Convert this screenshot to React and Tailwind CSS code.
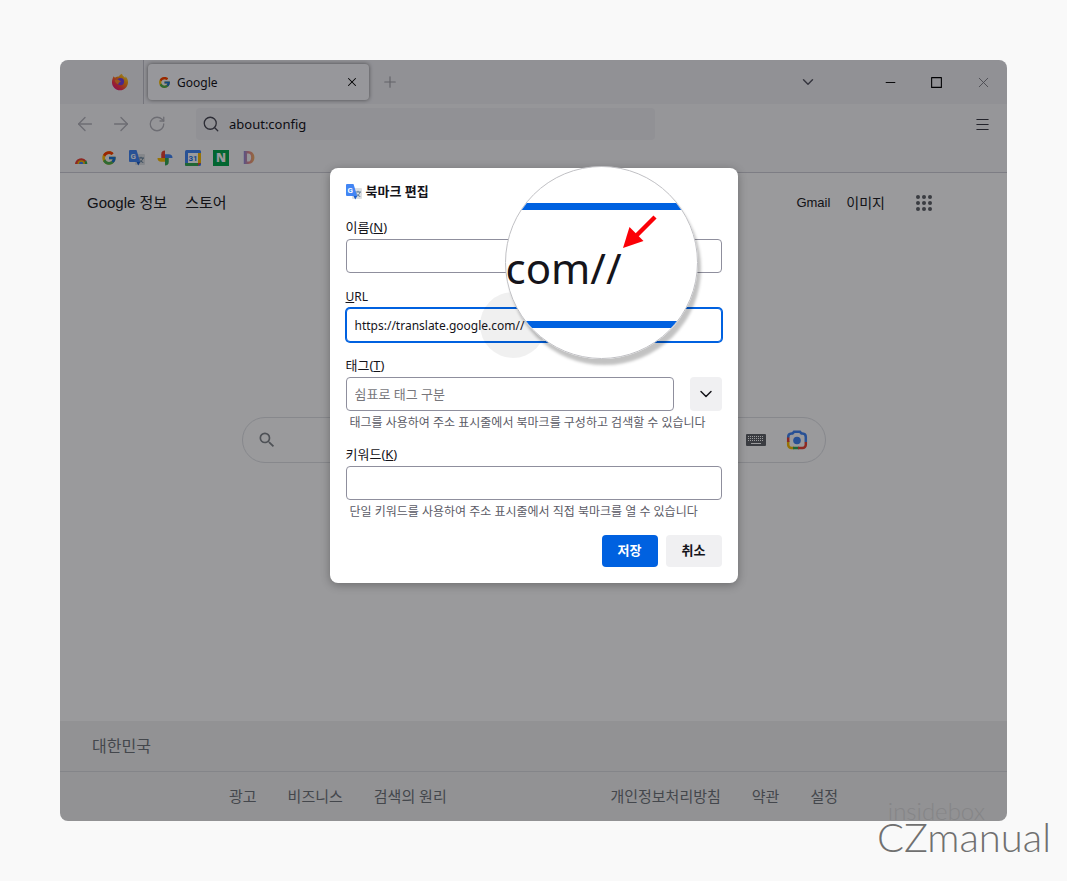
import { useState } from 'react';
import { ArrowLeft, ArrowRight, ChevronDown, Menu, Minus, Plus, RotateCw, Search, Square, X } from 'lucide-react';
import { FcGoogle } from 'react-icons/fc';
import { MdSearch } from 'react-icons/md';

function FirefoxIcon() {
  return (
    <svg width="18" height="18" viewBox="0 0 18 18" aria-hidden="true">
      <defs>
        <linearGradient id="fx" x1="1" y1="0" x2="0.2" y2="1">
          <stop offset="0" stopColor="#fff44f" />
          <stop offset="0.4" stopColor="#ff980e" />
          <stop offset="0.75" stopColor="#ff3647" />
          <stop offset="1" stopColor="#e31587" />
        </linearGradient>
      </defs>
      <path d="M2.600 3.200c.5.9 1 1.300 1.700 1.400C5.600 3.600 7 3.400 8 3.600 8.600 2.200 9.800 1.200 11 .8c0 2 2.300 2.800 3.300 4.200.2-.6.1-1.200-.1-1.800C16.200 4.800 17.200 7 17 9.400 16.800 13.800 13.300 17.200 9 17.200S1 13.700 1 9.400C1 7 1.600 5 2.600 3.200z" fill="url(#fx)" />
      <circle cx="9.500" cy="8.600" r="3.600" fill="#7542e5" />
      <path d="M3.800 7.200C5.800 6.100 7.500 6.700 8.800 7.700c1.300 0 1.300.9.300 1.200-1 .4-1.400 1-2 2.600-1.500-.8-3.200-2.300-3.300-4.300z" fill="#ff8a2f" />
    </svg>
  );
}

function RainbowIcon() {
  return (
    <svg width="16" height="16" viewBox="0 0 16 16" aria-hidden="true">
      <path d="M2 14a6.300 6.300 0 0 1 11.500-3L8 14z" fill="#e94235" />
      <path d="M13.300 10.500a6 6 0 0 1 1 3.500H9z" fill="#34a853" />
      <path d="M4.500 14a3.700 3.700 0 0 1 7.400 0z" fill="#fabb05" />
      <path d="M6 14a2.200 2.200 0 0 1 4.400 0z" fill="#4285f4" />
    </svg>
  );
}

function TranslateIcon() {
  return (
    <svg width="16" height="16" viewBox="0 0 16 16" aria-hidden="true">
      <rect x="6" y="4" width="10" height="11" rx="1" fill="#dcdfe3" />
      <path d="M9.500 8h5.500M12 6.800V8M14 8c-.4 2-1.800 3.500-3.500 4.300M10.500 9.500c.8 1.500 2 2.500 3.800 3" stroke="#5f7d95" strokeWidth="1" fill="none" />
      <path d="M1 0h6.500l3.700 12H1a1 1 0 0 1-1-1V1a1 1 0 0 1 1-1z" fill="#4285f4" />
      <path d="M7.500 12h3.700L9.300 15.500z" fill="#1a5dc8" />
      <text x="1.500" y="9" fontSize="8" fontWeight="700" fill="#fff" fontFamily="Roboto, sans-serif">G</text>
    </svg>
  );
}

function PhotosIcon() {
  return (
    <svg width="16" height="16" viewBox="0 0 16 16" aria-hidden="true">
      <path d="M8 8V.500a3.750 3.750 0 0 0-3.750 3.750V8z" fill="#ea4335" />
      <path d="M8 8h7.500a3.750 3.750 0 0 0-3.750-3.750H8z" fill="#4285f4" />
      <path d="M8 8v7.500a3.750 3.750 0 0 0 3.750-3.750V8z" fill="#34a853" />
      <path d="M8 8H.500a3.750 3.750 0 0 0 3.750 3.750H8z" fill="#fbbc04" />
    </svg>
  );
}

function CalendarIcon() {
  return (
    <svg width="16" height="16" viewBox="0 0 16 16" aria-hidden="true">
      <rect width="16" height="16" rx="1.500" fill="#4285f4" />
      <path d="M13 3h3v10h-3z" fill="#fbbc04" />
      <path d="M3 13h10v3H1.500A1.500 1.500 0 0 1 0 14.500V13z" fill="#34a853" />
      <path d="M13 13h3l-3 3z" fill="#ea4335" />
      <rect x="3" y="3" width="10" height="10" fill="#fff" />
      <text x="8" y="11" fontSize="8" fontWeight="700" textAnchor="middle" fill="#1a73e8" fontFamily="Roboto, sans-serif">31</text>
    </svg>
  );
}

function KeyboardIcon() {
  const columns = [3, 5, 7, 9, 11, 13, 15, 17];
  return (
    <svg width="20" height="12" viewBox="0 0 20 12" aria-hidden="true">
      <rect width="20" height="12" rx="1" fill="#5f6368" />
      {[2, 4, 6].map((y) => columns.map((x) => <rect key={`${x}-${y}`} x={x - 1} y={y} width="1" height="1" fill="#fff" />))}
      <rect x="5" y="9" width="10" height="1" fill="#fff" />
    </svg>
  );
}

function LensIcon() {
  return (
    <svg width="22" height="22" viewBox="0 0 22 22" fill="none" strokeWidth="2.500" aria-hidden="true">
      <path d="M2.200 9V8A3.500 3.500 0 0 1 5.500 4.500h1L8 2.800h6l1.500 1.700h1A3.500 3.500 0 0 1 19.800 8v5" stroke="#4285f4" />
      <path d="M2.200 12v3.700A3.300 3.300 0 0 0 5.500 19H8" stroke="#fbbc04" />
      <path d="M2.200 8.500V13" stroke="#ea4335" />
      <path d="M7 19h6" stroke="#34a853" />
      <path d="M12 19h4.500a3.300 3.300 0 0 0 3.300-3.300V13" stroke="#ea4335" />
      <circle cx="11" cy="11.500" r="3.800" fill="#4285f4" />
    </svg>
  );
}

function AppsIcon() {
  const spots = [2, 8, 14];
  return (
    <svg width="16" height="16" viewBox="0 0 16 16" fill="#5f6368" aria-hidden="true">
      {spots.map((y) => spots.map((x) => <circle key={`${x}-${y}`} cx={x} cy={y} r="2" />))}
    </svg>
  );
}

function TabStrip() {
  return (
    <div className="flex h-11 items-center bg-[#f0f0f4]">
      <div className="flex h-full w-21 items-center justify-end border-r border-[#c4c4cc] pr-3.5">
        <FirefoxIcon />
      </div>
      <div className="ml-1 flex h-9 w-[221px] items-center rounded-sm bg-[#fbfbfd] pr-2.5 pl-2.5 shadow-[0_0_4px_rgba(0,0,0,0.5)]">
        <FcGoogle size={13} />
        <span className="ml-1.5 flex-1 pt-px text-[12px] text-[#15141a]">Google</span>
        <button type="button" aria-label="탭 닫기"><X size={14} strokeWidth={1.75} /></button>
      </div>
      <button type="button" aria-label="새 탭" className="ml-3 text-[#a0a0a8]"><Plus size={18} strokeWidth={1.5} /></button>
      <div className="ml-auto flex items-center pr-[15px]">
        <button type="button" aria-label="모든 탭" className="mr-[66px] text-[#5b5b66]"><ChevronDown size={18} strokeWidth={2} /></button>
        <button type="button" aria-label="최소화" className="mr-8"><Minus size={15} strokeWidth={1.5} /></button>
        <button type="button" aria-label="최대화" className="mr-8"><Square size={13} strokeWidth={2} className="[&_rect]:[rx:0]" /></button>
        <button type="button" aria-label="닫기" className="text-[#77777f]"><X size={17} strokeWidth={1.25} /></button>
      </div>
    </div>
  );
}

function NavBar() {
  return (
    <div className="flex h-10 items-center bg-[#f9f9fb] pr-4 pl-[13px]">
      <div className="flex gap-3 text-[#b4b4bb]">
        <button type="button" aria-label="뒤로" className="flex w-6 justify-center"><ArrowLeft size={22} strokeWidth={1.5} /></button>
        <button type="button" aria-label="앞으로" className="flex w-6 justify-center"><ArrowRight size={22} strokeWidth={1.5} /></button>
        <button type="button" aria-label="새로 고침" className="flex w-6 items-center justify-center"><RotateCw size={18} strokeWidth={1.75} /></button>
      </div>
      <label className="ml-[27px] flex h-8 w-[459px] items-center rounded-sm bg-[#f0f0f4] pl-1.5">
        <Search size={18} strokeWidth={1.75} className="text-[#4a4a55]" />
        <input type="text" aria-label="주소" defaultValue="about:config" className="ml-[9px] min-w-0 flex-1 bg-transparent pt-0.5 text-[13px] text-[#15141a] outline-none" />
      </label>
      <button type="button" aria-label="메뉴" className="ml-auto text-[#3a3944]"><Menu size={17} strokeWidth={1.5} /></button>
    </div>
  );
}

function BookmarkBar() {
  return (
    <div className="flex h-[29px] items-center gap-3 border-b border-[#cfcfd8] bg-[#f9f9fb] pl-[13px]">
      <RainbowIcon />
      <FcGoogle size={16} />
      <TranslateIcon />
      <PhotosIcon />
      <CalendarIcon />
      <span className="flex size-4 items-center justify-center bg-[#03a94d] text-[12px] leading-none font-black text-white">N</span>
      <span className="w-4 bg-gradient-to-r from-[#5b7cff] via-[#e88a8a] to-[#f7c33c] bg-clip-text text-center font-['Roboto',sans-serif] text-[19px] leading-4 font-black text-transparent">D</span>
    </div>
  );
}

function GooglePage() {
  return (
    <>
      <main className="bg-white pb-[258px] font-['Liberation_Sans','Noto_Sans_CJK_KR',sans-serif]">
        <div className="flex h-[60px] items-center pr-[75px] pl-[27px] text-[14px] text-[#202124]">
          <a href="#about" className="text-[15px]">Google 정보</a>
          <a href="#store" className="ml-[18px] text-[15px]">스토어</a>
          <a href="#gmail" className="ml-auto text-[13px]">Gmail</a>
          <a href="#images" className="mr-[31px] ml-4">이미지</a>
          <AppsIcon />
        </div>
        <label className="mx-auto mt-[184px] flex h-[46px] max-w-[584px] items-center rounded-full border border-[#dfe1e5] pr-[17px] pl-3.5">
          <MdSearch size={20} className="text-[#80868b]" />
          <input type="text" aria-label="검색" className="min-w-0 flex-1 bg-transparent outline-none" />
          <span className="mr-5"><KeyboardIcon /></span>
          <LensIcon />
        </label>
      </main>
      <footer className="bg-[#f2f2f2] text-[15px] text-[#70757a]">
        <div className="flex h-[51px] items-center border-b border-[#dadce0] pl-8 text-[16px]">대한민국</div>
        <div className="flex h-[49px] items-center justify-between px-[169px]">
          <div className="flex gap-[31px]">
            <a href="#ads">광고</a>
            <a href="#business">비즈니스</a>
            <a href="#how">검색의 원리</a>
          </div>
          <div className="flex gap-[31px]">
            <a href="#privacy">개인정보처리방침</a>
            <a href="#terms">약관</a>
            <a href="#settings">설정</a>
          </div>
        </div>
      </footer>
    </>
  );
}

function Magnifier() {
  return (
    <div className="absolute top-[-2px] left-[175px] size-[193px] rounded-full shadow-[3px_6px_3px_rgba(0,0,0,0.24)]">
      <div className="size-full overflow-hidden rounded-full border border-[#c0c0c4] bg-white pt-9">
        <div className="flex h-[125px] items-center border-y-[7px] border-[#0061e0] pt-1 text-[42px] leading-none text-[#15141a]">
          com//
        </div>
      </div>
      <svg className="absolute top-12 left-[116px]" width="36" height="36" viewBox="0 0 36 36" aria-hidden="true">
        <path d="M34 3L14 23" stroke="#fb0007" strokeWidth="4.500" />
        <path d="M2 34L8.500 13 22.500 27z" fill="#fb0007" />
      </svg>
    </div>
  );
}

const inputClass = 'h-[34px] w-full rounded-sm border border-[#8f8f9d] bg-white px-2 text-[12px] text-[#15141a] outline-none placeholder:text-[13px] placeholder:text-[#77777c]';
const labelClass = 'flex h-[22px] items-center text-[13px]';
const hintClass = 'h-5 pl-1 text-[12px] leading-[23px] whitespace-nowrap text-[#5b5b66]';

function BookmarkDialog() {
  const [url, setUrl] = useState('https://translate.google.com//');

  return (
    <form role="dialog" aria-labelledby="dialog-title" className="relative w-[408px] rounded-lg bg-white p-4 text-[#15141a] shadow-[0_2px_10px_rgba(0,0,0,0.3)]">
      <div className="flex h-4 items-center gap-1">
        <TranslateIcon />
        <h1 id="dialog-title" className="text-[13px] font-bold">북마크 편집</h1>
      </div>

      <div className="mt-[17px]">
        <label htmlFor="name" className={labelClass}>이름(<u>N</u>)</label>
        <input id="name" type="text" className={inputClass} />
      </div>

      <div className="mt-[13px]">
        <label htmlFor="url" className="flex h-[22px] items-center text-[12px]"><u>U</u>RL</label>
        <input
          id="url"
          type="text"
          value={url}
          onChange={(e) => setUrl(e.target.value)}
          className="h-[34px] w-full rounded-sm border border-[#0061e0] bg-white px-2 text-[12px] ring-1 ring-[#0061e0] outline-none"
        />
      </div>

      <div className="mt-[13px]">
        <label htmlFor="tags" className={labelClass}>태그(<u>T</u>)</label>
        <div className="flex gap-4">
          <input id="tags" type="text" placeholder="쉼표로 태그 구분" className={inputClass} />
          <button type="button" aria-label="태그 목록" className="flex w-8 shrink-0 items-center justify-center rounded-sm bg-[#f0f0f2]">
            <ChevronDown size={20} strokeWidth={1.75} />
          </button>
        </div>
        <p className={hintClass}>태그를 사용하여 주소 표시줄에서 북마크를 구성하고 검색할 수 있습니다</p>
      </div>

      <div className="mt-[13px]">
        <label htmlFor="keyword" className={labelClass}>키워드(<u>K</u>)</label>
        <input id="keyword" type="text" className={inputClass} />
        <p className={hintClass}>단일 키워드를 사용하여 주소 표시줄에서 직접 북마크를 열 수 있습니다</p>
      </div>

      <div className="mt-[15px] flex justify-end gap-2 text-[13px] font-bold">
        <button type="button" className="h-8 w-14 rounded-sm bg-[#0061e0] text-white">저장</button>
        <button type="button" className="h-8 w-14 rounded-sm bg-[#f0f0f2]">취소</button>
      </div>

      <div className="pointer-events-none absolute top-[124px] left-[150px] size-[66px] rounded-full bg-black/6" />
      <Magnifier />
    </form>
  );
}

export default function App() {
  return (
    <div className="min-h-screen bg-[#f9f9f9] px-[60px] pt-[60px] font-['Noto_Sans','Noto_Sans_CJK_KR',sans-serif]">
      <div className="relative overflow-hidden rounded-lg">
        <TabStrip />
        <NavBar />
        <BookmarkBar />
        <GooglePage />
        <div className="absolute inset-0 flex items-start justify-center bg-[#020208]/40 pt-[108px]">
          <BookmarkDialog />
        </div>
      </div>

      {/* Watermark */}
      <div className="relative -mt-5 text-right font-['Lato',sans-serif] font-light">
        <div className="mr-[22px] text-[24px] leading-5 text-[#858587]">insidebox</div>
        <div className="mr-[-44px] text-[40px] leading-8 text-[#707070]">CZmanual</div>
      </div>
    </div>
  );
}
